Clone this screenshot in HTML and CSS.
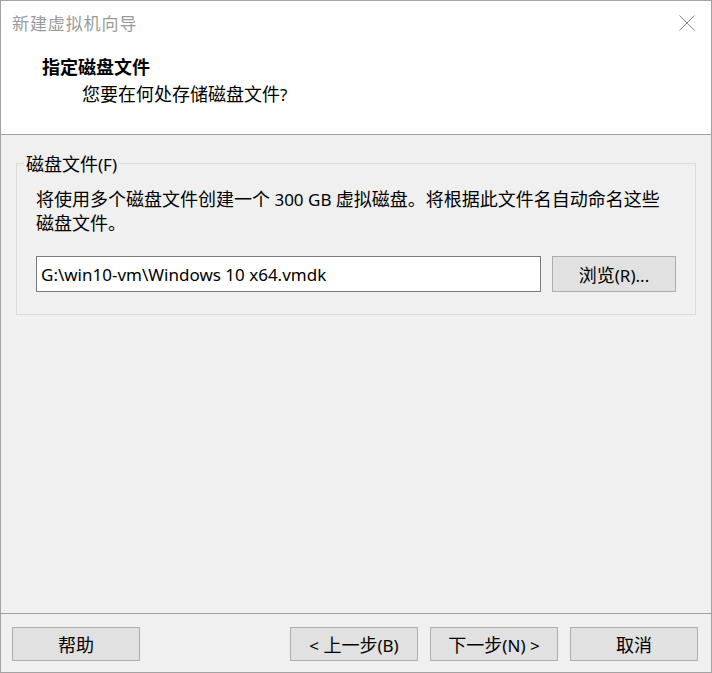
FILE: index.html
```html
<!DOCTYPE html>
<html lang="zh-CN">
<head>
<meta charset="utf-8">
<title>新建虚拟机向导</title>
<link rel="stylesheet" href="styles.css">
</head>
<body>
<div class="window">
  <div class="header">
    <div class="titlebar">
      <span class="title">新建虚拟机向导</span>
      <svg class="close" width="16" height="16" viewBox="0 0 16 16" aria-hidden="true">
        <path d="M0.5 0.5 L15.5 15.5 M15.5 0.5 L0.5 15.5" stroke="#8c8c8c" stroke-width="1" fill="none"/>
      </svg>
    </div>
    <div class="heading">指定磁盘文件</div>
    <div class="subtitle">您要在何处存储磁盘文件<span class="lat">?</span></div>
  </div>
  <div class="content">
    <fieldset class="group">
      <legend class="legend">磁盘文件<span class="lat">(F)</span></legend>
      <div class="desc">
        <div class="line">将使用多个磁盘文件创建一个<span class="lat"> 300 GB </span>虚拟磁盘。将根据此文件名自动命名这些</div>
        <div class="line">磁盘文件。</div>
      </div>
      <div class="file-row">
        <div class="input"><span class="path">G:\win10-vm\Windows 10 x64.vmdk</span></div>
        <div class="btn browse"><span>浏览<span class="lat">(R)...</span></span></div>
      </div>
    </fieldset>
  </div>
  <div class="footer">
    <div class="btn"><span>帮助</span></div>
    <div class="spacer"></div>
    <div class="btn"><span><span class="lat">&lt; </span>上一步<span class="lat">(B)</span></span></div>
    <div class="btn"><span>下一步<span class="lat">(N) &gt;</span></span></div>
    <div class="btn"><span>取消</span></div>
  </div>
</div>
</body>
</html>
```

FILE: styles.css
```css
html, body {
  margin: 0;
  padding: 0;
  background: #f0f0f0;
}

.window {
  width: 712px;
  height: 673px;
  box-sizing: border-box;
  border: 1px solid #a3a3a3;
  background: #f0f0f0;
  display: flex;
  flex-direction: column;
  font-family: "Noto Sans CJK SC", sans-serif;
  font-size: 18px;
  color: #000;
}

.lat {
  font-family: "Noto Sans", "Noto Sans CJK SC", sans-serif;
  font-size: 17px;
  line-height: 1;
}

.header {
  background: #fff;
  height: 133px;
  border-bottom: 1px solid #a0a0a0;
  flex: none;
}

.titlebar {
  height: 43px;
  display: flex;
  align-items: center;
  justify-content: space-between;
  padding: 0 16px 0 11px;
}

.title {
  font-size: 17px;
  letter-spacing: 0.9px;
  line-height: 18px;
  color: #9a9a9a;
}

.close {
  display: block;
}

.heading {
  margin-top: 13px;
  padding-left: 41px;
  line-height: 18px;
  font-weight: 700;
}

.subtitle {
  margin-top: 9px;
  padding-left: 81px;
  line-height: 18px;
}

.content {
  flex: 1;
  display: flex;
  flex-direction: column;
}

.group {
  margin: 19px 15px 0 15px;
  padding: 0 0 22px 7px;
  border: 1px solid #dcdcdc;
  min-width: 0;
}

.legend {
  padding: 0 2px;
  line-height: 18px;
}

.desc {
  margin-top: 13px;
  padding-left: 12px;
  line-height: 24px;
}

.line {
  white-space: nowrap;
}

.file-row {
  margin-top: 22px;
  padding-left: 12px;
  display: flex;
  gap: 11px;
}

.input {
  width: 505px;
  height: 36px;
  box-sizing: border-box;
  border: 1px solid #7a7a7a;
  background: #fff;
  display: flex;
  align-items: center;
  padding-left: 4px;
}

.path {
  font-family: "Noto Sans", sans-serif;
  font-size: 17px;
  line-height: 1;
}

.btn {
  width: 128px;
  height: 34px;
  box-sizing: border-box;
  border: 1px solid #adadad;
  background: #e1e1e1;
  display: flex;
  align-items: center;
  justify-content: center;
  line-height: 18px;
  white-space: nowrap;
}

.browse {
  width: 124px;
  height: 36px;
}

.footer {
  flex: none;
  box-sizing: border-box;
  height: 59px;
  border-top: 1px solid #a0a0a0;
  display: flex;
  align-items: flex-start;
  gap: 12px;
  padding: 13px 13px 0 11px;
}

.spacer {
  flex: 1;
}
```
